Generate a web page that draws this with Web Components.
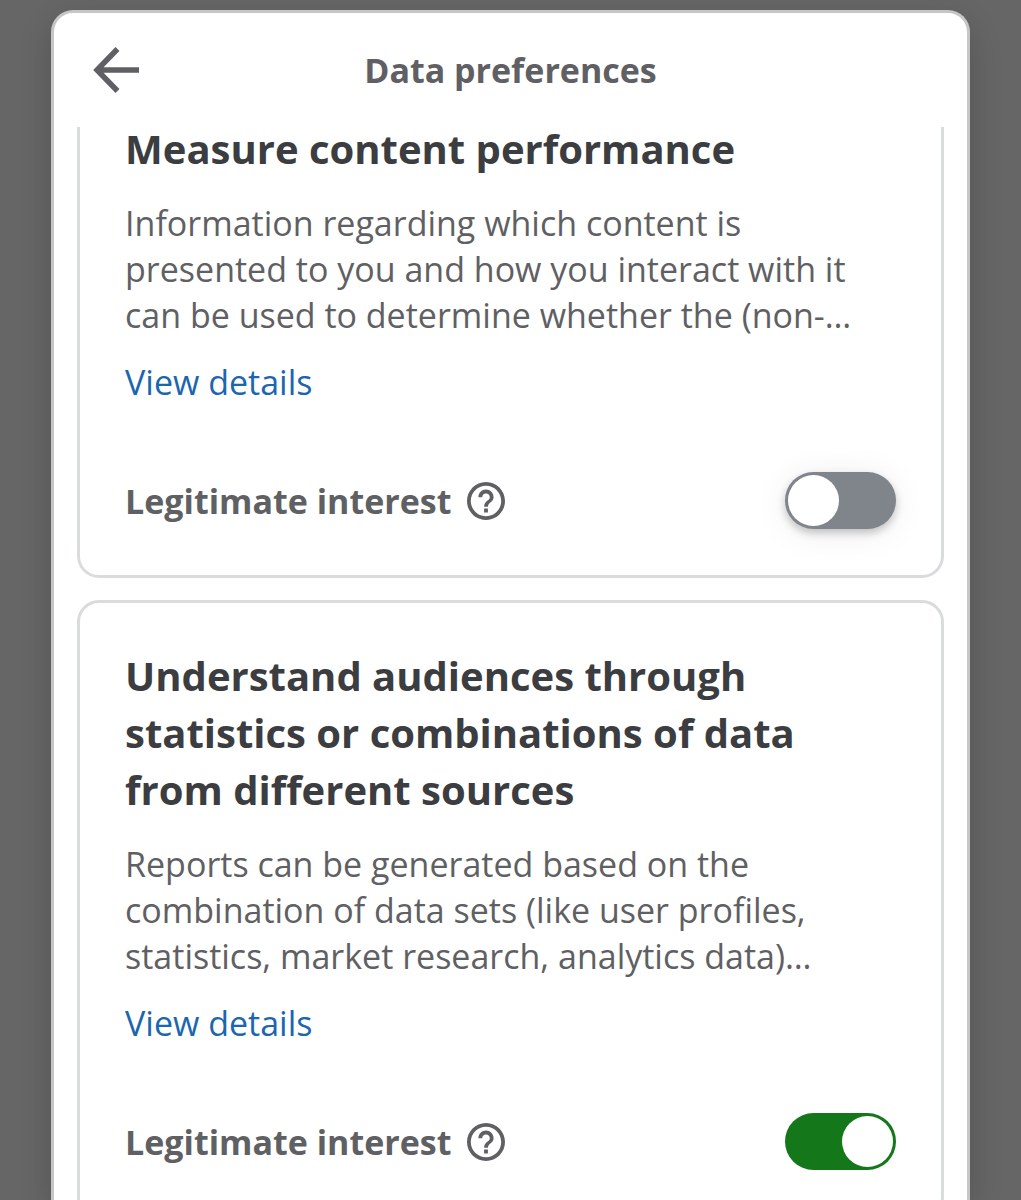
<!DOCTYPE html>
<html lang="en">
<head>
<meta charset="utf-8">
<meta name="viewport" content="width=device-width, initial-scale=1">
<title>Data preferences</title>
<style>
  html, body { height: 100%; margin: 0; }
  body {
    background: #666;
    overflow: hidden;
    font-family: "Open Sans", "Noto Sans", sans-serif;
    font-size: 34px;
    line-height: 46px;
    --text: #5f6063;
    --strong: #3b3d40;
    --line: #dadbdd;
    --link: #1b66b0;
  }
</style>
</head>
<body>
<preferences-dialog heading="Data preferences" scroll-start="54">
  <purpose-card>
    <span slot="title">Measure content performance</span>
    <span slot="description">Information regarding which content is presented to you and how you interact with it can be used to determine whether the (non-…</span>
    <interest-toggle slot="control" raised>Legitimate interest</interest-toggle>
  </purpose-card>
  <purpose-card>
    <span slot="title">Understand audiences through statistics or combinations of data from different sources</span>
    <span slot="description">Reports can be generated based on the combination of data sets (like user profiles, statistics, market research, analytics data)…</span>
    <interest-toggle slot="control" checked>Legitimate interest</interest-toggle>
  </purpose-card>
</preferences-dialog>

<script>
class PreferencesDialog extends HTMLElement {
  connectedCallback() {
    const root = this.attachShadow({ mode: 'open' });
    root.innerHTML = `
      <style>
        :host { display: flex; justify-content: center; height: 100%; box-sizing: border-box; padding-top: 10px; }
        section {
          display: flex; flex-direction: column;
          width: 90%; box-sizing: border-box;
          background: #fff;
          border: 3px solid #c6c6c6; border-bottom: 0;
          border-radius: 22px 22px 0 0;
          box-shadow: 0 12px 32px rgba(0, 0, 0, .18);
        }
        header {
          display: grid; grid-template-columns: 66px 1fr 66px; align-items: center;
          height: 114px; padding: 0 29px; flex: none;
        }
        h1 { margin: 0; font-size: 34px; line-height: 46px; font-weight: 700; text-align: center; color: var(--text); }
        button { display: flex; justify-content: center; padding: 0; border: 0; background: none; color: var(--text); cursor: pointer; }
        .list {
          display: flex; flex-direction: column; gap: 22px;
          flex: 1; min-height: 0; overflow-y: auto; scrollbar-width: none;
          padding: 0 23px 23px;
        }
      </style>
      <section role="dialog" aria-labelledby="heading">
        <header>
          <button type="button" aria-label="Back">
            <svg width="46" height="46" viewBox="0 0 46 46" fill="none" stroke="currentColor" stroke-width="5.500">
              <path d="M24.500 2 4 23l20.500 21M5 23h41"/>
            </svg>
          </button>
          <h1 id="heading"></h1>
        </header>
        <div class="list"><slot></slot></div>
      </section>`;
    root.querySelector('h1').textContent = this.getAttribute('heading');
    requestAnimationFrame(() => {
      root.querySelector('.list').scrollTop = Number(this.getAttribute('scroll-start'));
    });
  }
}

class PurposeCard extends HTMLElement {
  connectedCallback() {
    this.attachShadow({ mode: 'open' }).innerHTML = `
      <style>
        :host {
          display: flex; flex-direction: column; align-items: flex-start; flex: none;
          padding: 44px 45px 46px; border: 3px solid var(--line); border-radius: 22px;
        }
        h2 { margin: 0 0 23px; font-size: 40px; line-height: 57px; font-weight: 700; color: var(--strong); }
        p { margin: 0 0 21px; color: var(--text); }
        a { color: var(--link); text-decoration: none; }
        .control { align-self: stretch; margin-top: 67px; }
      </style>
      <h2><slot name="title"></slot></h2>
      <p><slot name="description"></slot></p>
      <a href="#details">View details</a>
      <div class="control"><slot name="control"></slot></div>`;
  }
}

class InterestToggle extends HTMLElement {
  connectedCallback() {
    const root = this.attachShadow({ mode: 'open' });
    root.innerHTML = `
      <style>
        :host { display: flex; align-items: center; justify-content: space-between; }
        .label { display: flex; align-items: center; gap: 16px; }
        label { font-weight: 700; color: var(--text); }
        button { display: flex; padding: 0; border: 0; background: none; color: var(--text); cursor: pointer; }
        input {
          appearance: none; display: flex; flex: none; box-sizing: border-box;
          width: 111px; height: 57px; margin: 0; padding: 3px;
          border-radius: 29px; background: #80848b; cursor: pointer;
        }
        input::before { content: ""; width: 51px; height: 51px; border-radius: 50%; background: #fff; }
        input:checked { background: #14781b; justify-content: flex-end; }
        :host([raised]) input { box-shadow: 0 4px 8px rgba(0, 0, 0, .22), 0 4px 36px rgba(0, 0, 0, .07); }
      </style>
      <div class="label">
        <label for="switch"><slot></slot></label>
        <button type="button" aria-label="About legitimate interest">
          <svg width="38" height="38" viewBox="2 2 20 20" fill="currentColor">
            <path d="M11 18h2v-2h-2v2zm1-16C6.480 2 2 6.480 2 12s4.480 10 10 10 10-4.480 10-10S17.520 2 12 2zm0 18c-4.410 0-8-3.590-8-8s3.590-8 8-8 8 3.590 8 8-3.590 8-8 8zm0-14c-2.210 0-4 1.790-4 4h2c0-1.100.9-2 2-2s2 .9 2 2c0 2-3 1.750-3 5h2c0-2.250 3-2.500 3-5 0-2.210-1.790-4-4-4z"/>
          </svg>
        </button>
      </div>
      <input id="switch" type="checkbox" role="switch">`;
    root.querySelector('input').checked = this.hasAttribute('checked');
  }
}

customElements.define('interest-toggle', InterestToggle);
customElements.define('purpose-card', PurposeCard);
customElements.define('preferences-dialog', PreferencesDialog);
</script>
</body>
</html>
